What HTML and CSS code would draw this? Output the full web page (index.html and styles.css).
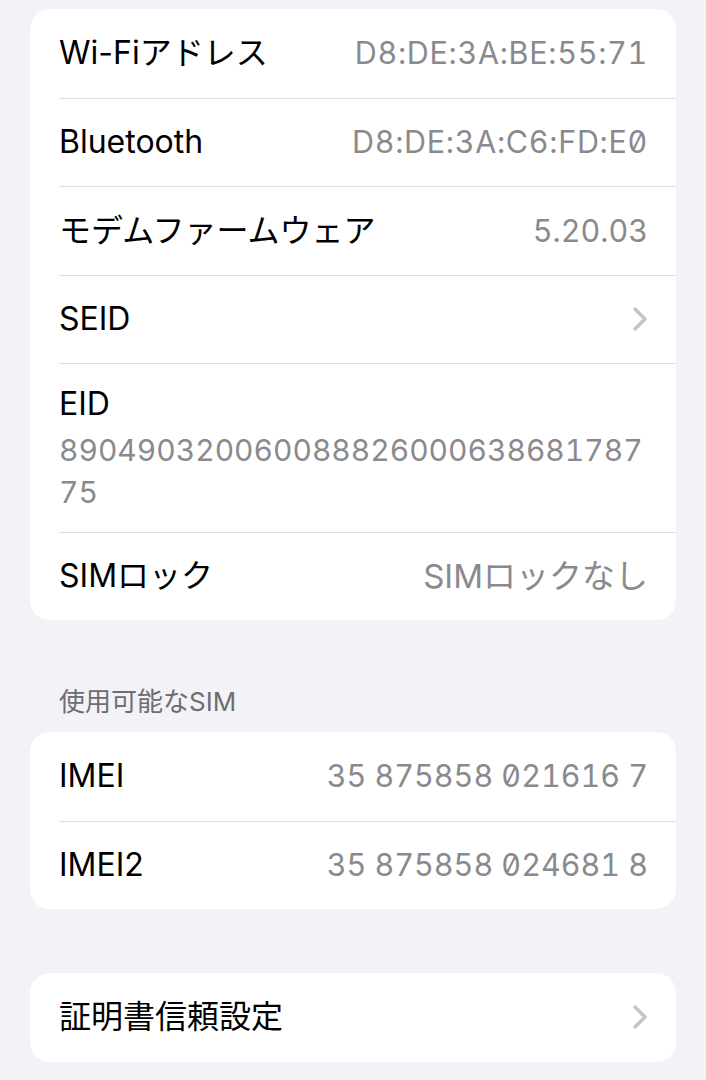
FILE: index.html
```html
<!DOCTYPE html>
<html lang="ja">
<head>
    <meta charset="UTF-8">
    <meta name="viewport" content="width=device-width, initial-scale=1.0">
    <title>情報</title>
    <link rel="stylesheet" href="styles.css">
</head>
<body>
    <div class="page">
        <div class="group">
            <div class="row">
                <span class="label">Wi-Fiアドレス</span>
                <span class="value num mac">D8:DE:3A:BE:55:71</span>
            </div>
            <div class="row">
                <span class="label">Bluetooth</span>
                <span class="value num mac">D8:DE:3A:C6:FD:E0</span>
            </div>
            <div class="row">
                <span class="label">モデムファームウェア</span>
                <span class="value num">5.20.03</span>
            </div>
            <div class="row">
                <span class="label">SEID</span>
                <svg class="chevron" width="16" height="26" viewBox="0 0 16 26">
                    <path d="M3 3 L13 13 L3 23" fill="none" stroke="#c4c4c7" stroke-width="3.4" stroke-linecap="round" stroke-linejoin="round"/>
                </svg>
            </div>
            <div class="row row-stack">
                <span class="label">EID</span>
                <span class="value num eid">89049032006008882600063868178775</span>
            </div>
            <div class="row">
                <span class="label">SIMロック</span>
                <span class="value">SIMロックなし</span>
            </div>
        </div>

        <div class="section-title">使用可能なSIM</div>
        <div class="group">
            <div class="row">
                <span class="label">IMEI</span>
                <span class="value num slashed">35 875858 021616 7</span>
            </div>
            <div class="row">
                <span class="label">IMEI2</span>
                <span class="value num slashed">35 875858 024681 8</span>
            </div>
        </div>

        <div class="group group-spaced">
            <div class="row">
                <span class="label">証明書信頼設定</span>
                <svg class="chevron" width="16" height="26" viewBox="0 0 16 26">
                    <path d="M3 3 L13 13 L3 23" fill="none" stroke="#c4c4c7" stroke-width="3.4" stroke-linecap="round" stroke-linejoin="round"/>
                </svg>
            </div>
        </div>
    </div>
</body>
</html>
```

FILE: styles.css
```css
body {
    font-family: Inter, "Noto Sans CJK JP", sans-serif;
    background-color: #f2f2f7;
    margin: 0;
    padding: 0;
    color: #000;
}
.page {
    padding: 9px 30px 20px;
}
.group {
    background-color: #fff;
    border-radius: 20px;
    overflow: hidden;
}
.group-spaced {
    margin-top: 64px;
}
.row {
    display: flex;
    justify-content: space-between;
    align-items: center;
    box-sizing: border-box;
    height: 88.5px;
    margin-left: 29px;
    padding-right: 29px;
    border-top: 1px solid #dedee0;
}
.row:first-child {
    border-top: none;
}
.row-stack {
    display: block;
    height: 168.5px;
    padding-top: 19px;
}
.label {
    font-size: 32px;
    line-height: 42px;
}
.value {
    font-size: 33px;
    line-height: 42px;
    color: #8a8a8e;
    margin-right: -1px;
}
.num {
    font-size: 30.5px;
    font-variant-numeric: tabular-nums;
}
.mac {
    letter-spacing: 0.7px;
    font-feature-settings: "tnum", "zero";
}
.slashed {
    font-feature-settings: "tnum", "zero";
}
.eid {
    display: block;
    margin-top: 4px;
    margin-right: 0;
    font-size: 30px;
    word-break: break-all;
}
.chevron {
    display: block;
    margin-right: -1px;
}
.section-title {
    margin: 66px 0 14px 29px;
    font-size: 26px;
    line-height: 32px;
    color: #6d6d72;
}
```
